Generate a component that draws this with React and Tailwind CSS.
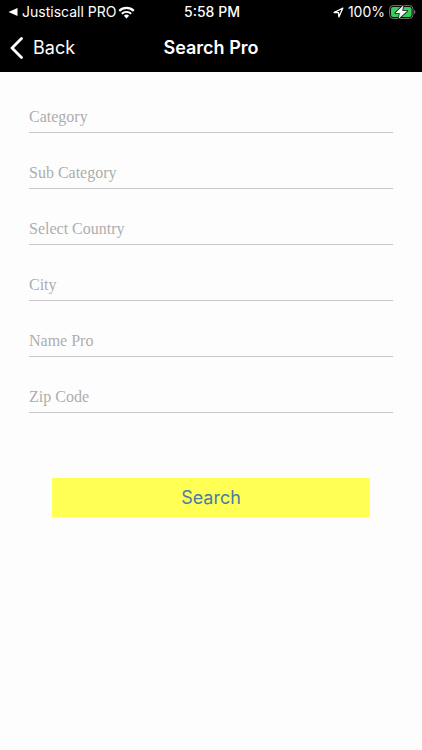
import React from "react";

const FIELDS = [
  { id: "category", label: "Category" },
  { id: "sub-category", label: "Sub Category" },
  { id: "country", label: "Select Country" },
  { id: "city", label: "City" },
  { id: "name", label: "Name Pro" },
  { id: "zip", label: "Zip Code" },
];

function WifiIcon() {
  return (
    <svg width="17" height="13" viewBox="0 0 18 13" fill="none" aria-hidden="true">
      <path d="M1.3 4.8a11 11 0 0 1 15.4 0" stroke="#fff" strokeWidth="2.3" />
      <path d="M4 7.9a7.1 7.1 0 0 1 10 0" stroke="#fff" strokeWidth="2.1" />
      <path d="M9 12.8 6.2 9.9a4 4 0 0 1 5.6 0z" fill="#fff" />
    </svg>
  );
}

function LocationIcon() {
  return (
    <svg width="11" height="11" viewBox="0 0 12 12" fill="none" aria-hidden="true">
      <path
        d="M1.2 6 10.8 1.2 6.4 10.8 6 6.2z"
        stroke="#fff"
        strokeWidth="1.4"
        strokeLinejoin="round"
      />
    </svg>
  );
}

function BatteryIcon() {
  return (
    <svg width="27" height="14" viewBox="0 0 27 14" fill="none" aria-hidden="true">
      <rect x="0.6" y="0.6" width="23.4" height="12.8" rx="3.6" stroke="#777" strokeWidth="1" />
      <rect x="2" y="2" width="20.6" height="10" rx="2.2" fill="#35d058" />
      <path d="M25.2 4.8c1.6.6 1.6 3.8 0 4.4z" fill="#777" />
      <path
        d="M14.2 0.6 6.6 8h4.6L9.8 13.4l8-7.4h-4.9z"
        fill="#fff"
        stroke="#000"
        strokeWidth="2"
        strokeLinejoin="round"
      />
      <path
        d="M14.2 0.6 6.6 8h4.6L9.8 13.4l8-7.4h-4.9z"
        fill="#fff"
        stroke="#fff"
        strokeWidth="0.5"
        strokeLinejoin="round"
      />
    </svg>
  );
}

function StatusBar() {
  return (
    <div className="grid h-6 grid-cols-[1fr_auto_1fr] items-center pr-1.5 pl-2 text-sm">
      <div className="flex items-center gap-1">
        <svg width="10" height="8" viewBox="0 0 10 8" aria-hidden="true">
          <path d="M0.5 4 9.5 0v8z" fill="#fff" />
        </svg>
        <span className="flex items-center gap-0.5">
          Justiscall PRO
          <WifiIcon />
        </span>
      </div>
      <span className="font-medium">5:58 PM</span>
      <div className="flex items-center justify-end gap-1">
        <LocationIcon />
        <span>100%</span>
        <BatteryIcon />
      </div>
    </div>
  );
}

function NavBar() {
  return (
    <nav className="grid h-12 grid-cols-[1fr_auto_1fr] items-center px-2.5">
      <button type="button" className="flex items-center gap-2.5 justify-self-start text-lg">
        <svg width="13" height="22" viewBox="0 0 13 22" fill="none" aria-hidden="true">
          <path
            d="M11.5 1.5 2 11l9.5 9.5"
            stroke="#fff"
            strokeWidth="2.8"
            strokeLinecap="round"
            strokeLinejoin="round"
          />
        </svg>
        Back
      </button>
      <h1 className="text-lg font-semibold">Search Pro</h1>
    </nav>
  );
}

export default function App() {
  return (
    <div className="min-h-screen bg-[#fdfdfd] font-['Inter',sans-serif]">
      <header className="bg-black text-white">
        <StatusBar />
        <NavBar />
      </header>
      <form className="px-[29px] pt-[5px]" onSubmit={(e) => e.preventDefault()}>
        {FIELDS.map(({ id, label }) => (
          <div key={id} className="flex h-14 items-end">
            <input
              id={id}
              type="text"
              aria-label={label}
              placeholder={label}
              className="h-8 w-full rounded-none border-b border-[#c8c8c8] bg-transparent font-['Liberation_Serif',serif] text-base text-black outline-none placeholder:text-[#adadad]"
            />
          </div>
        ))}
        <div className="px-[23px] pt-[65px]">
          <button
            type="submit"
            className="h-[39px] w-full bg-[#ffff54] text-lg text-[#4a7ba8]"
          >
            Search
          </button>
        </div>
      </form>
    </div>
  );
}
